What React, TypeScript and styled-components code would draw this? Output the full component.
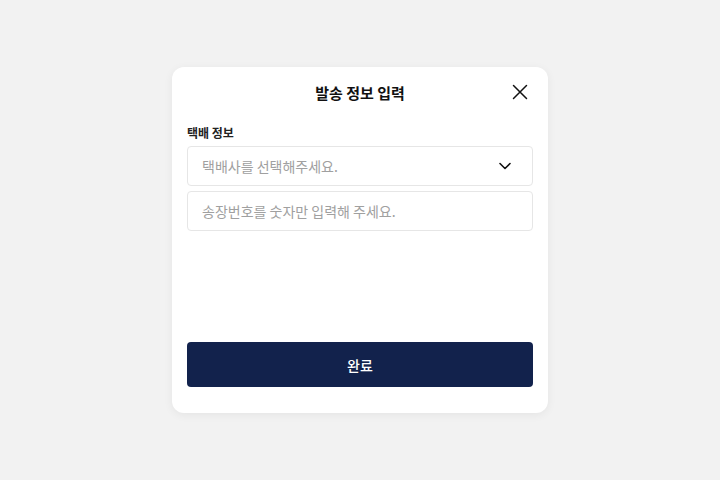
import React from 'react';
import styled, { createGlobalStyle } from 'styled-components';

const GlobalStyle = createGlobalStyle`
  html, body, #root {
    margin: 0;
    height: 100%;
  }
  body {
    background: #f2f2f2;
    font-family: 'Noto Sans CJK KR', 'Noto Sans', sans-serif;
  }
`;

const Page = styled.div`
  height: 100%;
  display: flex;
  align-items: center;
  justify-content: center;
`;

const Modal = styled.div`
  width: 376px;
  height: 346px;
  box-sizing: border-box;
  background: #fff;
  border-radius: 12px;
  box-shadow: 0 2px 10px rgba(0, 0, 0, 0.06);
  padding: 0 15px 26px;
  display: flex;
  flex-direction: column;
`;

const Header = styled.div`
  position: relative;
  height: 50px;
  display: flex;
  align-items: center;
  justify-content: center;
`;

const Title = styled.h2`
  margin: 0;
  font-size: 15px;
  font-weight: 700;
  color: #111;
`;

const CloseButton = styled.button`
  position: absolute;
  right: 1px;
  top: 50%;
  transform: translateY(-50%);
  width: 24px;
  height: 24px;
  padding: 0;
  border: 0;
  background: none;
  display: flex;
  align-items: center;
  justify-content: center;
  cursor: pointer;
`;

const Label = styled.div`
  margin-top: 8px;
  margin-bottom: 5px;
  font-size: 12px;
  line-height: 16px;
  font-weight: 700;
  color: #222;
`;

const Fields = styled.div`
  display: flex;
  flex-direction: column;
  gap: 5px;
`;

const Field = styled.div`
  height: 40px;
  box-sizing: border-box;
  border: 1px solid #e6e6e6;
  border-radius: 4px;
  padding: 0 21px 0 14px;
  display: flex;
  align-items: center;
  justify-content: space-between;
  font-size: 14px;
  color: #a0a0a0;
`;

const SubmitButton = styled.button`
  margin-top: auto;
  height: 45px;
  border: 0;
  border-radius: 4px;
  background: #12224c;
  color: #fff;
  font-family: inherit;
  font-size: 14px;
  font-weight: 500;
`;

export default function App() {
  return (
    <>
      <GlobalStyle />
      <Page>
        <Modal>
          <Header>
            <Title>발송 정보 입력</Title>
            <CloseButton aria-label="닫기">
              <svg width="16" height="16" viewBox="0 0 16 16" fill="none">
                <path d="M1.5 1.5L14.5 14.5M14.5 1.5L1.5 14.5" stroke="#111" strokeWidth="1.5" strokeLinecap="round" />
              </svg>
            </CloseButton>
          </Header>
          <Label>택배 정보</Label>
          <Fields>
            <Field>
              <span>택배사를 선택해주세요.</span>
              <svg width="12" height="8" viewBox="0 0 12 8" fill="none">
                <path d="M1 1.5L6 6.5L11 1.5" stroke="#111" strokeWidth="1.6" strokeLinecap="round" strokeLinejoin="round" />
              </svg>
            </Field>
            <Field>
              <span>송장번호를 숫자만 입력해 주세요.</span>
            </Field>
          </Fields>
          <SubmitButton>완료</SubmitButton>
        </Modal>
      </Page>
    </>
  );
}
